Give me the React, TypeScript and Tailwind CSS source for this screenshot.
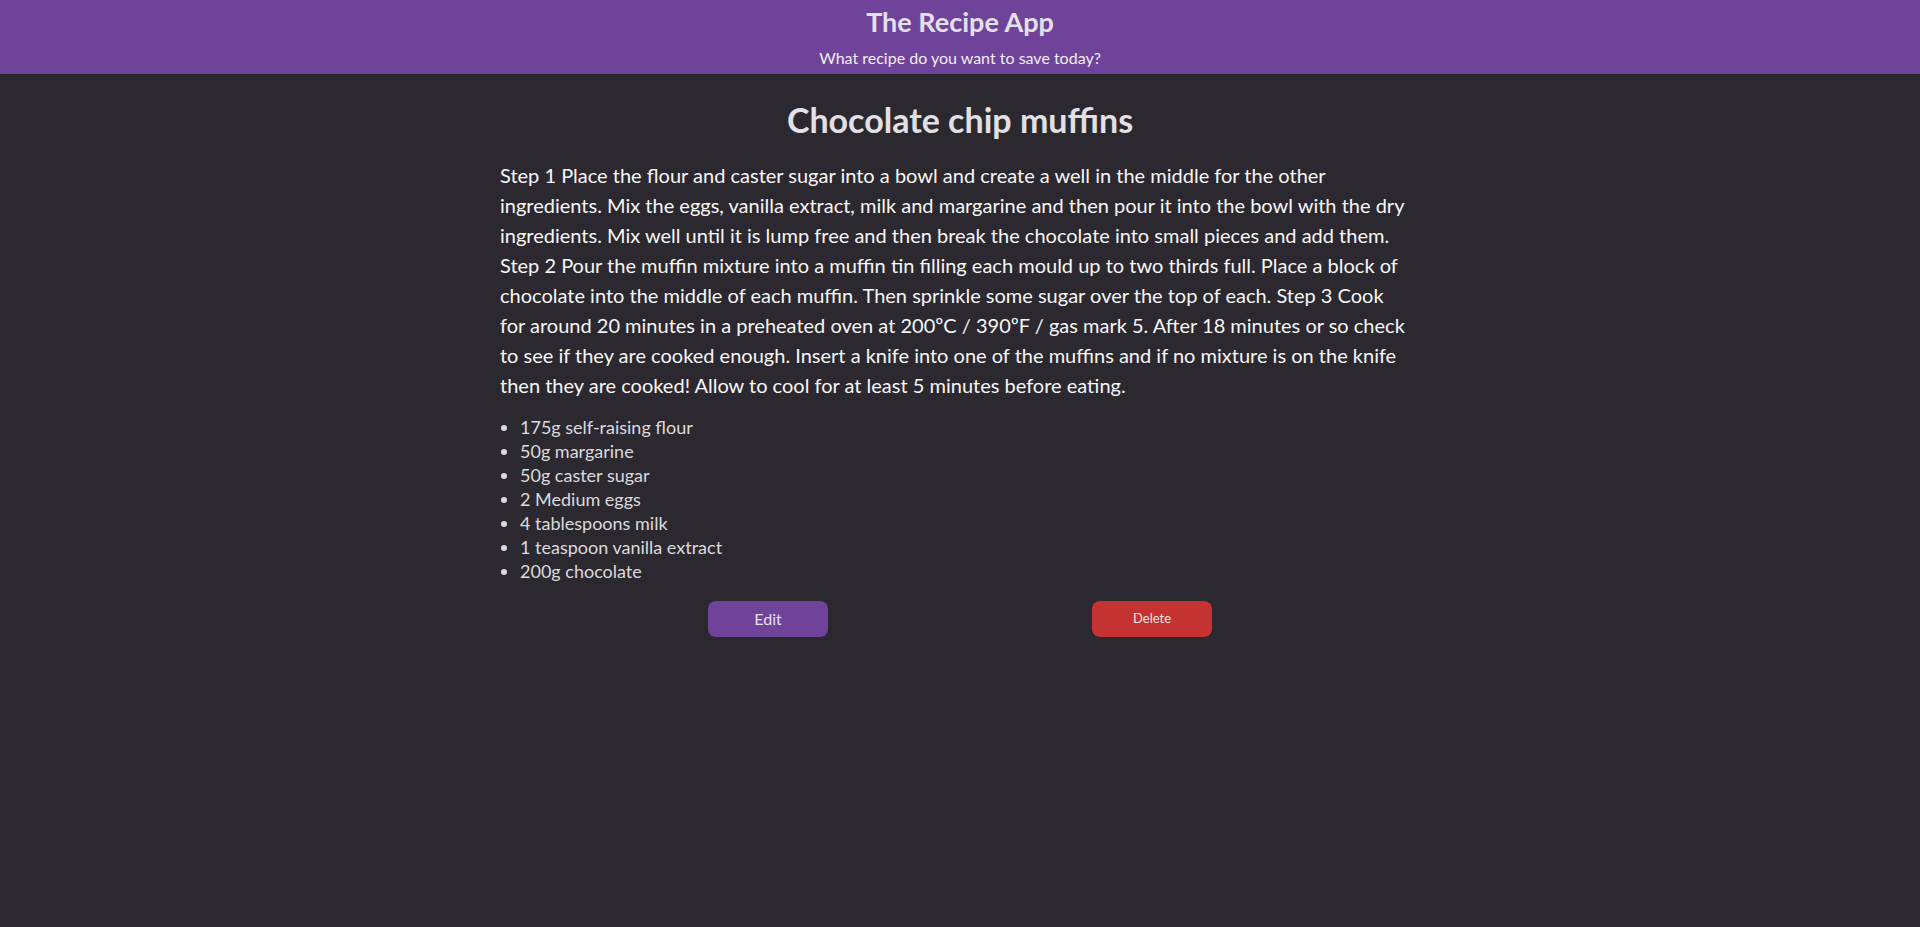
const ingredients = [
  '175g self-raising flour',
  '50g margarine',
  '50g caster sugar',
  '2 Medium eggs',
  '4 tablespoons milk',
  '1 teaspoon vanilla extract',
  '200g chocolate',
];

const method =
  'Step 1 Place the flour and caster sugar into a bowl and create a well in the middle for the other ingredients. Mix the eggs, vanilla extract, milk and margarine and then pour it into the bowl with the dry ingredients. Mix well until it is lump free and then break the chocolate into small pieces and add them. Step 2 Pour the muffin mixture into a muffin tin filling each mould up to two thirds full. Place a block of chocolate into the middle of each muffin. Then sprinkle some sugar over the top of each. Step 3 Cook for\u00a0around 20 minutes in a preheated oven at 200ºC / 390ºF / gas mark 5. After 18 minutes or so check to see if they are cooked enough. Insert a knife into one of the muffins and if no mixture is on the knife then they are cooked! Allow to cool for at least 5 minutes before eating.';

export default function App() {
  return (
    <div className="min-h-screen bg-[#2b292f] font-['Segoe_UI',Lato,sans-serif]">
      <header className="flex h-[74px] flex-col items-center bg-[#6f4399] pt-[5px]">
        <h1 className="text-[27px] leading-[34px] font-bold text-[#e4e0ea]">The Recipe App</h1>
        <p className="mt-[8px] text-[16px] leading-[22px] text-[#f1edf5]">What recipe do you want to save today?</p>
      </header>

      <main className="mx-auto flex w-[920px] flex-col items-center pt-[26px]">
        <h2 className="text-[34px] leading-[40px] font-bold text-[#e2e0e4]">Chocolate chip muffins</h2>
        <p className="mt-[20px] w-full text-[20px] leading-[30px] text-[#f7f6f8]">{method}</p>
        <ul className="mt-[15px] w-full list-disc pl-5 text-[18px] leading-[24px] text-[#dcdadf]">
          {ingredients.map((item) => (
            <li key={item}>{item}</li>
          ))}
        </ul>
        <div className="mt-[18px] flex gap-[264px]">
          <button className="h-[36px] w-[120px] rounded-lg bg-[#6f4399] text-[16px] text-[#e4e0ea]">Edit</button>
          <button className="h-[36px] w-[120px] rounded-lg bg-[#c53232] text-[13px] text-[#ece6e6]">Delete</button>
        </div>
      </main>
    </div>
  );
}
